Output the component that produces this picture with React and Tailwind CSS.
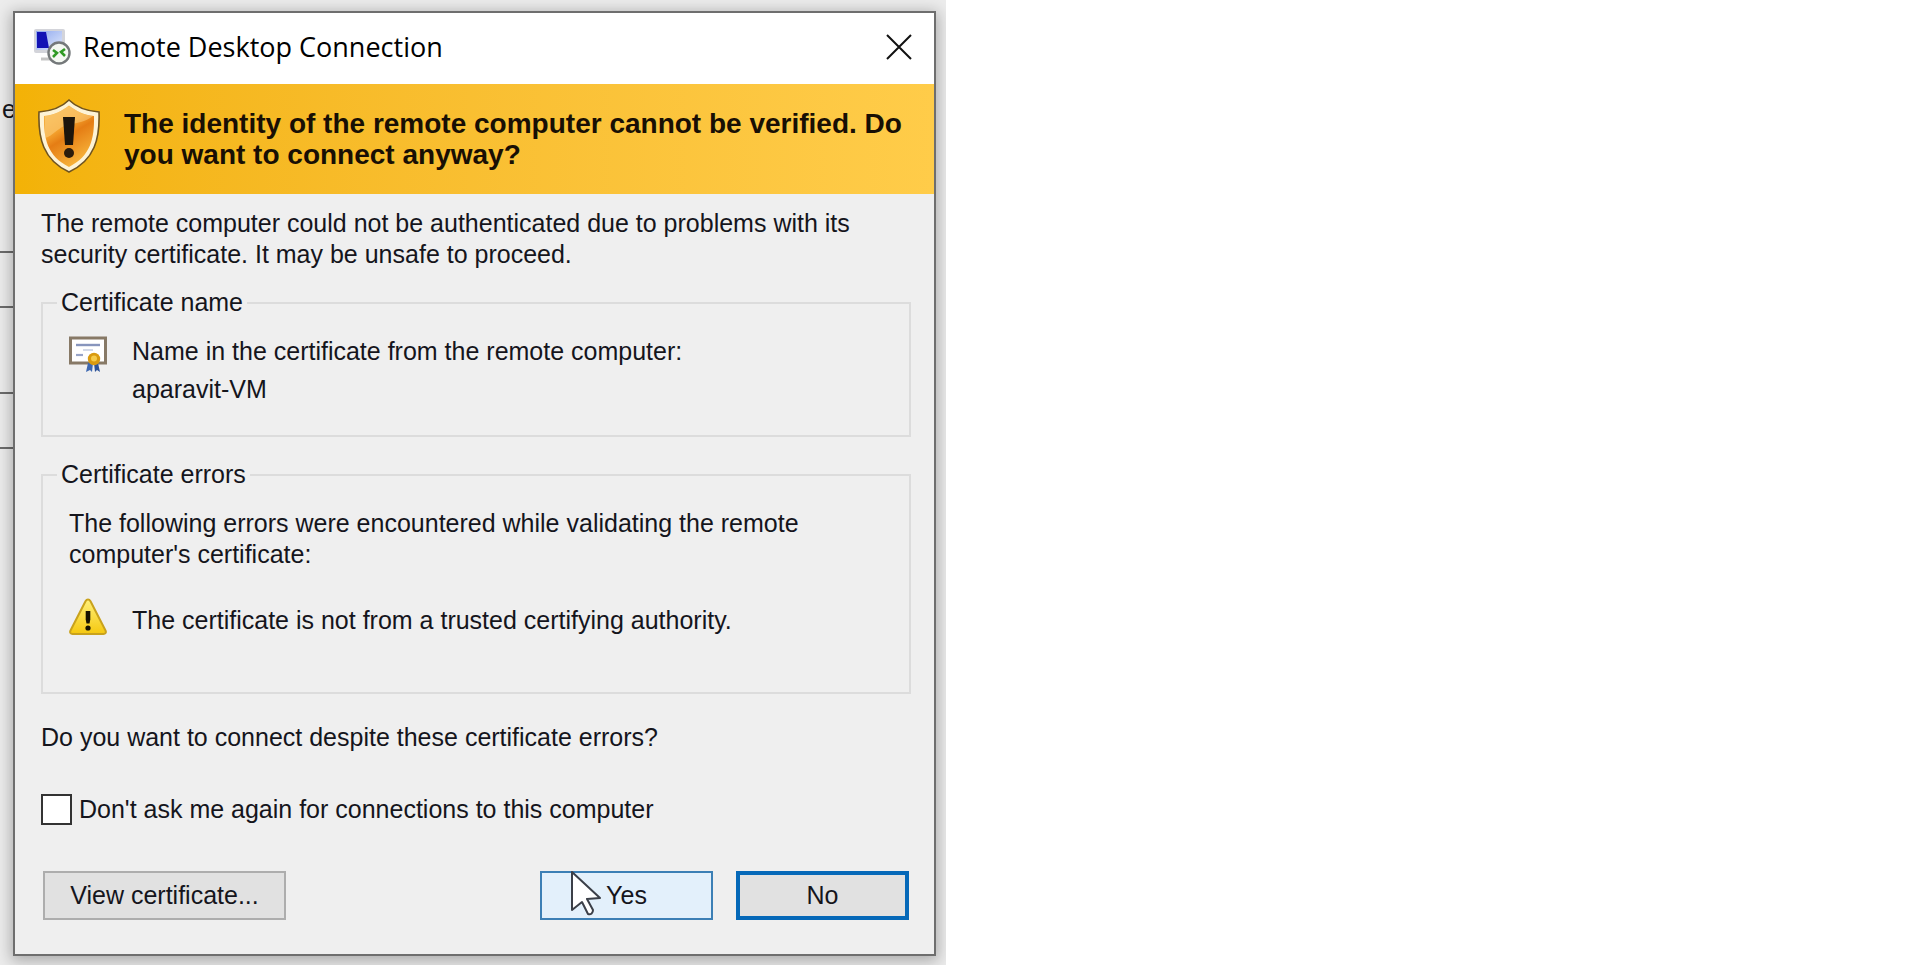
import React from 'react';

const RemoteDesktopIcon = () => (
  <svg className="h-[38px] w-[38px]" viewBox="0 0 38 38" aria-hidden="true">
    <defs>
      <linearGradient id="screen" x1="0" y1="0" x2="1" y2="1">
        <stop offset="0" stopColor="#8fa8ee" />
        <stop offset="1" stopColor="#dfe8fc" />
      </linearGradient>
    </defs>
    <rect x="1" y="1" width="31" height="24" rx="2" fill="#d3d4da" />
    <rect x="3" y="3" width="26" height="19" fill="url(#screen)" />
    <path d="M4 4h9l3 16H4z" fill="#1212b4" />
    <path d="M8 31h12" stroke="#c4c4c4" strokeWidth="3" />
    <circle cx="26" cy="25" r="10.5" fill="#f4f8f2" stroke="#74787a" strokeWidth="2.4" />
    <path d="M20 22l4 3-4 4M32 21l-4 3 4 4" fill="none" stroke="#2f9a24" strokeWidth="2.6" />
  </svg>
);

const ShieldIcon = () => (
  <svg className="h-[74px] w-[64px] shrink-0" viewBox="0 0 64 74" aria-hidden="true">
    <defs>
      <linearGradient id="shield" x1="0.1" y1="0" x2="0.6" y2="1">
        <stop offset="0" stopColor="#f6b74a" />
        <stop offset="0.4" stopColor="#f3a02c" />
        <stop offset="0.55" stopColor="#e57d14" />
        <stop offset="1" stopColor="#f8b63c" />
      </linearGradient>
    </defs>
    <path
      d="M32 1C25 8 14 12 2 13c-1 26 4 48 30 60 26-12 31-34 30-60C50 12 39 8 32 1z"
      fill="#fdf3d6"
      stroke="#6f5420"
      strokeWidth="1.6"
    />
    <path
      d="M32 6.500C25 12 17 16 7 17c-.5 23 3.500 40 25 51 21.500-11 25.500-28 25-51C47 16 39 12 32 6.500z"
      fill="url(#shield)"
    />
    <path d="M8 39c8-2 13-11 23-13 9-2 17-3 25-9C47 16 39 12 32 7 25 12 17 16 8 17z" fill="#ffdc92" opacity="0.45" />
    <path d="M26 18h12l-2 28h-8z" fill="#1d150c" />
    <circle cx="32" cy="54" r="5" fill="#2c1c0c" />
  </svg>
);

const CertificateIcon = () => (
  <svg className="h-[36px] w-[38px] shrink-0" viewBox="0 0 38 36" aria-hidden="true">
    <rect x="1.500" y="2" width="35" height="25" fill="#fff" stroke="#877966" strokeWidth="3" />
    <path d="M7 9h24" stroke="#8795bd" strokeWidth="2.400" />
    <path d="M14 14h10" stroke="#c5cce0" strokeWidth="1.500" />
    <path d="M7 19h7" stroke="#98a4c8" strokeWidth="2.200" />
    <path d="M19 27h5l-1 9-2-2-4 2z" fill="#3d68b2" />
    <path d="M25 27h4l2 9-3-2-2 2z" fill="#2c5298" />
    <circle cx="25" cy="23" r="6.200" fill="#d99a10" />
    <circle cx="25" cy="22.500" r="3" fill="#f5cb4b" />
  </svg>
);

const WarningIcon = () => (
  <svg className="h-[38px] w-[38px] shrink-0" viewBox="0 0 38 38" aria-hidden="true">
    <defs>
      <linearGradient id="warning" x1="0" y1="0" x2="0" y2="1">
        <stop offset="0" stopColor="#fff07a" />
        <stop offset="1" stopColor="#f5c80f" />
      </linearGradient>
    </defs>
    <path
      d="M19 1.500c1.200 0 2 .8 2.500 1.700l15 29.300c1 2-.2 3.500-2 3.500h-31c-1.800 0-3-1.500-2-3.500l15-29.300c.5-.9 1.300-1.700 2.500-1.700z"
      fill="url(#warning)"
      stroke="#c9a21c"
      strokeWidth="2"
      strokeLinejoin="round"
    />
    <path d="M16.700 13h4.600v8.500l-.8 4h-3l-.8-4z" fill="#161200" />
    <circle cx="19" cy="30" r="2.600" fill="#161200" />
  </svg>
);

const PointerIcon = () => (
  <svg className="absolute -top-0.5 left-7 h-[48px] w-[32px]" viewBox="0 0 32 48" aria-hidden="true">
    <path
      d="M2 1v38l10-8 6 12c3 1 5-1 5-4l-6-11 13-1z"
      fill="#fff"
      stroke="#3b3f48"
      strokeWidth="2"
      strokeLinejoin="round"
    />
  </svg>
);

// Sliver of the window that sits behind the dialog
const WindowBehind = () => (
  <div className="flex w-[13px] shrink-0 flex-col">
    <span className="mt-[94px] h-[31px] pl-[2px]">e</span>
    <div className="mt-[126px] h-[57px] border-y-2 border-[#6c6c6c]" />
    <div className="mt-[84px] h-[57px] border-y-2 border-[#6c6c6c]" />
  </div>
);

const Group = ({ title, className, children }) => (
  <fieldset className={`border-2 border-[#dcdcdc] px-[26px] ${className}`}>
    <legend className="-ml-[12px] px-[4px]">{title}</legend>
    {children}
  </fieldset>
);

const App = () => {
  return (
    <div className="min-h-screen bg-white font-['Liberation_Sans',Arial,sans-serif] text-[25px] leading-[31px] text-[#15151c]">
      <div className="flex min-h-screen w-full max-w-[946px] overflow-hidden bg-[#ececec]">
        <WindowBehind />
        <section
          role="dialog"
          aria-labelledby="dialog-title"
          className="relative mt-[11px] mr-[10px] mb-[9px] flex-1 border-2 border-[#6e6e6e] bg-[#efefef] shadow-[0_3px_14px_2px_rgba(0,0,0,0.28)]"
        >
          <header className="flex h-[71px] items-center bg-white pr-[22px] pb-[4px] pl-[18px]">
            <RemoteDesktopIcon />
            <h1
              id="dialog-title"
              className="ml-[12px] flex-1 font-['Open_Sans','Noto_Sans',sans-serif] text-[27px] text-black"
            >
              Remote Desktop Connection
            </h1>
            <button type="button" aria-label="Close" className="flex h-[27px] w-[27px] items-center justify-center">
              <svg className="h-[26px] w-[26px]" viewBox="0 0 26 26" aria-hidden="true">
                <path d="M1 1l24 24M25 1L1 25" stroke="#111" strokeWidth="2" />
              </svg>
            </button>
          </header>

          <div className="flex h-[110px] items-start bg-linear-to-r from-[#f3b206] to-[#ffcc49] pt-[15px] pl-[22px]">
            <ShieldIcon />
            <h2 className="mt-[9px] ml-[23px] text-[28px] leading-[31px] font-bold text-[#180f04]">
              The identity of the remote computer cannot be verified. Do
              <br />
              you want to connect anyway?
            </h2>
          </div>

          <form className="pt-[14px] pr-[23px] pb-[34px] pl-[26px]">
            <p>
              The remote computer could not be authenticated due to problems with its
              <br />
              security certificate. It may be unsafe to proceed.
            </p>

            <Group title="Certificate name" className="mt-[17px] pb-[30px]">
              <div className="mt-[18px] flex items-start gap-[25px]">
                <CertificateIcon />
                <div className="flex flex-col gap-[7px]">
                  <span>Name in the certificate from the remote computer:</span>
                  <span>aparavit-VM</span>
                </div>
              </div>
            </Group>

            <Group title="Certificate errors" className="mt-[22px] pb-[56px]">
              <p className="mt-[18px]">
                The following errors were encountered while validating the remote
                <br />
                computer's certificate:
              </p>
              <div className="mt-[28px] flex items-end gap-[25px]">
                <WarningIcon />
                <span>The certificate is not from a trusted certifying authority.</span>
              </div>
            </Group>

            <p className="mt-[28px]">Do you want to connect despite these certificate errors?</p>

            <div className="mt-[41px] flex items-center gap-[7px]">
              <input
                id="dont-ask"
                type="checkbox"
                className="h-[31px] w-[31px] appearance-none border-2 border-[#333] bg-white"
              />
              <label htmlFor="dont-ask">Don't ask me again for connections to this computer</label>
            </div>

            <div className="mt-[46px] flex px-[2px]">
              <button type="button" className="h-[49px] w-[243px] border-2 border-[#adadad] bg-[#e1e1e1]">
                View certificate...
              </button>
              <button
                type="button"
                className="relative ml-auto h-[49px] w-[173px] border-2 border-[#3c7fb5] bg-[#e3f0fb]"
              >
                Yes
                <PointerIcon />
              </button>
              <button type="button" className="ml-[23px] h-[49px] w-[173px] border-4 border-[#0568b8] bg-[#e1e1e1]">
                No
              </button>
            </div>
          </form>
        </section>
      </div>
    </div>
  );
};

export default App;
